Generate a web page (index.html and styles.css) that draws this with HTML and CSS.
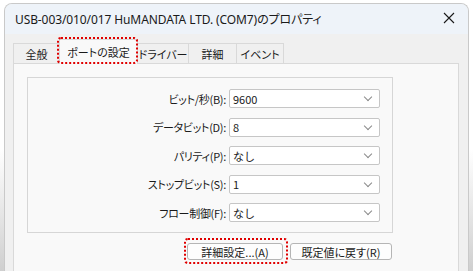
FILE: index.html
```html
<!DOCTYPE html>
<html lang="ja">

<head>
    <meta charset="UTF-8">
    <meta name="viewport" content="width=device-width, initial-scale=1.0">
    <title>USB-003/010/017 HuMANDATA LTD. (COM7)のプロパティ</title>
    <link rel="stylesheet" href="styles.css">
</head>

<body>

    <div class="window">
        <div class="titlebar">
            <span class="title">USB-003/010/017 HuMANDATA LTD. (COM7)のプロパティ</span>
            <span class="close">
                <svg width="12" height="12" viewBox="0 0 12 12">
                    <path d="M1 1 L11 11 M11 1 L1 11" stroke="#1a1a1a" stroke-width="1.1" fill="none" />
                </svg>
            </span>
        </div>

        <div class="dialog">
            <!-- Tabs -->
            <div class="tabs">
                <div class="tab tab-general">全般</div>
                <div class="tab tab-active">ポートの設定</div>
                <div class="tab tab-driver">ドライバー</div>
                <div class="tab tab-detail">詳細</div>
                <div class="tab tab-event">イベント</div>
            </div>

            <!-- Port settings panel -->
            <div class="panel">
                <div class="groupbox">
                    <div class="row">
                        <label class="field-label">ビット/秒(B):</label>
                        <div class="combo"><span>9600</span><span class="chevron"></span></div>
                    </div>
                    <div class="row">
                        <label class="field-label">データビット(D):</label>
                        <div class="combo"><span>8</span><span class="chevron"></span></div>
                    </div>
                    <div class="row">
                        <label class="field-label">パリティ(P):</label>
                        <div class="combo"><span>なし</span><span class="chevron"></span></div>
                    </div>
                    <div class="row">
                        <label class="field-label">ストップビット(S):</label>
                        <div class="combo"><span>1</span><span class="chevron"></span></div>
                    </div>
                    <div class="row">
                        <label class="field-label">フロー制御(F):</label>
                        <div class="combo"><span>なし</span><span class="chevron"></span></div>
                    </div>
                </div>

                <div class="buttons">
                    <button class="btn btn-advanced">詳細設定...(A)</button>
                    <button class="btn btn-default">既定値に戻す(R)</button>
                </div>
            </div>
        </div>
    </div>

    <!-- Highlight marks -->
    <div class="mark mark-tab"></div>
    <div class="mark mark-button"></div>

</body>

</html>
```

FILE: styles.css
```css
body {
    margin: 0;
    width: 473px;
    height: 271px;
    overflow: hidden;
    position: relative;
    font-family: "Noto Sans", "Noto Sans CJK JP", sans-serif;
    background: linear-gradient(to bottom, #ffffff 0%, #ffffff 55%, #cfcfcf 100%);
    color: #1a1a1a;
}

.window {
    margin: 3px 0 0 4px;
    width: 463px;
    height: 280px;
    border: 1px solid #c9c9c9;
    border-bottom: none;
    border-radius: 8px 8px 0 0;
    background-color: #f0f0f0;
    overflow: hidden;
}

.titlebar {
    height: 30px;
    display: flex;
    align-items: center;
    justify-content: space-between;
    padding: 0 10px 0 10px;
    background-color: #eef3f9;
}

.title {
    font-size: 12px;
    letter-spacing: -0.1px;
    margin-top: -1px;
    font-feature-settings: "palt";
}

.close {
    display: flex;
    margin-right: 3px;
    margin-top: -2px;
}

.dialog {
    padding: 9px 9px 0 8px;
}

.tabs {
    display: flex;
    align-items: flex-end;
    height: 20px;
    font-size: 11px;
    font-family: "Noto Sans CJK JP", sans-serif;
    font-feature-settings: "palt";
    white-space: nowrap;
}

.tab {
    height: 19px;
    border: 1px solid #d9d9d9;
    border-bottom: none;
    border-right: none;
    background-color: #f0f0f0;
    display: flex;
    align-items: center;
    justify-content: center;
    box-sizing: content-box;
}

.tab-general {
    width: 45px;
}

.tab-active {
    width: 77px;
    height: 24px;
    margin-bottom: -1px;
    background-color: #f9f9f9;
    border-right: 1px solid #d9d9d9;
    position: relative;
    z-index: 1;
}

.tab-driver {
    width: 50px;
    border-left: none;
}

.tab-detail {
    width: 47px;
}

.tab-event {
    width: 46px;
    border-right: 1px solid #d9d9d9;
}

.panel {
    width: 418px;
    height: 220px;
    padding: 13px 13px 0 13px;
    border: 1px solid #d9d9d9;
    background-color: #f9f9f9;
}

.groupbox {
    width: 364px;
    border: 1px solid #d6d6d6;
    padding: 11px 0 10px 0;
    display: flex;
    flex-direction: column;
    gap: 9.5px;
}

.row {
    display: flex;
    align-items: center;
    height: 19px;
}

.field-label {
    width: 198px;
    text-align: right;
    font-size: 11px;
    font-family: "Noto Sans CJK JP", sans-serif;
    font-feature-settings: "palt";
    letter-spacing: -0.3px;
    margin-right: 3px;
}

.combo {
    width: 146px;
    height: 17px;
    border: 1px solid #c6c6c6;
    border-radius: 2px;
    background-color: #fff;
    display: flex;
    align-items: center;
    justify-content: space-between;
    padding-left: 3px;
    box-sizing: content-box;
    font-size: 11px;
    font-family: "Noto Sans CJK JP", sans-serif;
}

.chevron {
    width: 5px;
    height: 5px;
    border-right: 1px solid #8a8a8a;
    border-bottom: 1px solid #8a8a8a;
    transform: rotate(45deg);
    margin: -3px 8px 0 0;
}

.buttons {
    width: 366px;
    display: flex;
    justify-content: flex-end;
    gap: 7px;
    margin-top: 10px;
}

.btn {
    height: 17px;
    padding: 0;
    border: 1px solid #b5b5b5;
    border-radius: 3px;
    background-color: #fdfdfd;
    font-size: 11px;
    font-family: "Noto Sans CJK JP", sans-serif;
    font-feature-settings: "palt";
    color: #1a1a1a;
    line-height: 14px;
}

.btn-advanced {
    width: 96px;
}

.btn-default {
    width: 102px;
    margin-right: 1px;
}

.mark {
    position: absolute;
    border: 2px dotted #e00000;
    border-radius: 4px;
    z-index: 5;
}

.mark-tab {
    left: 57px;
    top: 37px;
    width: 77px;
    height: 23px;
}

.mark-button {
    left: 184px;
    top: 238px;
    width: 100px;
    height: 22px;
}
```
